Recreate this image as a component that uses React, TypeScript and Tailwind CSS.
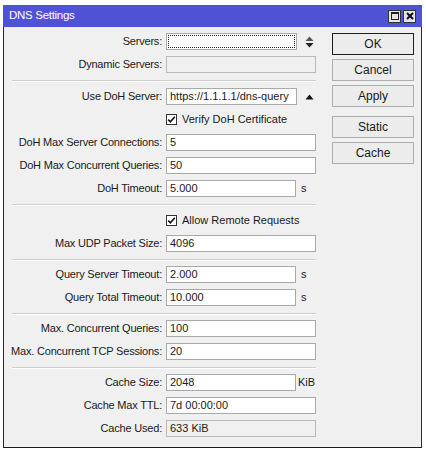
import type { ReactNode } from "react";

type FieldProps = {
  value?: string;
  className?: string;
  disabled?: boolean;
};

function Field({ value = "", className = "w-[150px]", disabled = false }: FieldProps) {
  return (
    <div
      className={`flex h-[17px] items-center border px-[3px] ${className} ${
        disabled ? "border-[#b9b9b9] bg-[#f0f0f0]" : "border-[#a9a9a9] bg-white"
      }`}
    >
      <span className="whitespace-nowrap leading-none">{value}</span>
    </div>
  );
}

function Row({ label, children }: { label: string; children: ReactNode }) {
  return (
    <div className="flex h-[23px] items-center">
      <div className="w-[158px] whitespace-nowrap text-right tracking-[-0.2px]">{label}:</div>
      <div className="ml-[4px] flex items-center">{children}</div>
    </div>
  );
}

function Unit({ children }: { children: ReactNode }) {
  return <span className="ml-[5px] leading-none">{children}</span>;
}

function Separator({ tall = false }: { tall?: boolean }) {
  return (
    <div
      className={`ml-[8px] mt-[4px] h-[2px] border-y border-t-[#cdcdcd] border-b-white ${tall ? "mb-[3px]" : "mb-[2px]"}`}
    />
  );
}

function Check({ label }: { label: string }) {
  return (
    <div className="flex h-[23px] items-center pl-[162px]">
      <div className="flex h-[11px] w-[11px] items-center justify-center border border-[#333] bg-white">
        <svg width="9" height="9" viewBox="0 0 9 9">
          <path d="M1.2 4.6 L3.4 6.8 L7.8 1.8" fill="none" stroke="#111" strokeWidth="1.6" />
        </svg>
      </div>
      <span className="ml-[5px] leading-none">{label}</span>
    </div>
  );
}

function Btn({ children, primary = false }: { children: ReactNode; primary?: boolean }) {
  return (
    <div
      className={`flex h-[22px] w-[82px] items-center justify-center bg-[#ececec] ${
        primary ? "border border-[#1e1e1e]" : "border border-[#adadad]"
      }`}
    >
      {children}
    </div>
  );
}

export default function App() {
  return (
    <div className="h-[454px] w-[426px] bg-white pl-[3px] pt-[5px] font-['Liberation_Sans',Arial,sans-serif] text-[11px] text-[#1a1a1a]">
      <div className="flex h-[443px] w-[419px] flex-col">
        {/* title bar */}
        <div className="flex h-[22px] items-center justify-between bg-[#4f52d4] pl-[6px] pr-[6px]">
          <span className="text-[11.5px] tracking-[-0.3px] text-white">DNS Settings</span>
          <div className="flex gap-[2px]">
            <div className="flex h-[13px] w-[13px] items-center justify-center border border-[#333] bg-[#e4e4e4]">
              <div className="h-[8px] w-[8px] border border-t-2 border-[#222]" />
            </div>
            <div className="flex h-[13px] w-[13px] items-center justify-center border border-[#333] bg-[#e4e4e4]">
              <svg width="8" height="8" viewBox="0 0 8 8">
                <path d="M1 1 L7 7 M7 1 L1 7" stroke="#111" strokeWidth="2" />
              </svg>
            </div>
          </div>
        </div>

        <div className="flex flex-1 border-x border-b border-x-[#2a2a2a] border-b-[#1a1a1a] bg-[#f0f0f0] pt-[3px]">
          {/* form */}
          <div className="flex w-[312px] flex-col">
            <Row label="Servers">
              <div className="h-[17px] w-[131px] border border-[#a9a9a9] bg-white p-[1px]">
                <div className="h-full w-full border border-dotted border-[#222]" />
              </div>
              <svg className="ml-[8px]" width="9" height="12" viewBox="0 0 9 12">
                <path d="M4.5 0.5 L8.5 5 L0.5 5 Z" fill="#555" />
                <path d="M4.5 11.5 L8.5 7 L0.5 7 Z" fill="#222" />
              </svg>
            </Row>
            <Row label="Dynamic Servers">
              <Field disabled />
            </Row>
            <Separator tall />
            <Row label="Use DoH Server">
              <Field value="https://1.1.1.1/dns-query" className="w-[131px]" />
              <svg className="ml-[8px]" width="9" height="6" viewBox="0 0 9 6">
                <path d="M4.5 0.5 L8.5 5.5 L0.5 5.5 Z" fill="#111" />
              </svg>
            </Row>
            <Check label="Verify DoH Certificate" />
            <Row label="DoH Max Server Connections">
              <Field value="5" />
            </Row>
            <Row label="DoH Max Concurrent Queries">
              <Field value="50" />
            </Row>
            <Row label="DoH Timeout">
              <Field value="5.000" className="w-[130px]" />
              <Unit>s</Unit>
            </Row>
            <Separator tall />
            <Check label="Allow Remote Requests" />
            <Row label="Max UDP Packet Size">
              <Field value="4096" />
            </Row>
            <Separator />
            <Row label="Query Server Timeout">
              <Field value="2.000" className="w-[130px]" />
              <Unit>s</Unit>
            </Row>
            <Row label="Query Total Timeout">
              <Field value="10.000" className="w-[130px]" />
              <Unit>s</Unit>
            </Row>
            <Separator />
            <Row label="Max. Concurrent Queries">
              <Field value="100" />
            </Row>
            <Row label="Max. Concurrent TCP Sessions">
              <Field value="20" />
            </Row>
            <Separator />
            <Row label="Cache Size">
              <Field value="2048" className="w-[130px]" />
              <span className="ml-[2px] leading-none">KiB</span>
            </Row>
            <Row label="Cache Max TTL">
              <Field value="7d 00:00:00" />
            </Row>
            <Row label="Cache Used">
              <Field value="633 KiB" disabled />
            </Row>
          </div>

          {/* buttons */}
          <div className="ml-[16px] flex flex-col pt-[3px] text-[12px]">
            <div className="flex flex-col gap-[4px]">
              <Btn primary>OK</Btn>
              <Btn>Cancel</Btn>
              <Btn>Apply</Btn>
            </div>
            <div className="mt-[9px] flex flex-col gap-[4px]">
              <Btn>Static</Btn>
              <Btn>Cache</Btn>
            </div>
          </div>
        </div>
      </div>
    </div>
  );
}
